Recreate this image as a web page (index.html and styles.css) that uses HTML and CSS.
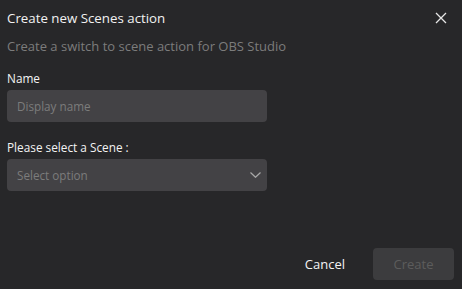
FILE: index.html
```html
<!DOCTYPE html>
<html lang="en">
<head>
<meta charset="UTF-8">
<meta name="viewport" content="width=device-width, initial-scale=1.0">
<title>Create new Scenes action</title>
<link rel="stylesheet" href="styles.css">
</head>
<body>
<div class="dialog">
    <div class="header">
        <h2 class="title">Create new Scenes action</h2>
        <button class="close-btn" aria-label="Close">
            <svg width="12" height="12" viewBox="0 0 12 12"><path d="M1 1L11 11M11 1L1 11" stroke="#e6e6e6" stroke-width="1.3" fill="none"/></svg>
        </button>
    </div>
    <p class="subtitle">Create a switch to scene action for OBS Studio</p>

    <label class="label" for="displayName">Name</label>
    <input type="text" id="displayName" class="input-field" placeholder="Display name">

    <label class="label" for="scene">Please select a Scene :</label>
    <div class="select-wrap">
        <div class="select-field" id="scene">Select option</div>
        <svg class="chevron" width="11" height="6" viewBox="0 0 11 6"><path d="M0.5 0.5L5.5 5.3L10.5 0.5" stroke="#a8a8a8" stroke-width="1.2" fill="none"/></svg>
    </div>

    <div class="footer">
        <button class="cancel-btn">Cancel</button>
        <button class="create-btn" disabled>Create</button>
    </div>
</div>
</body>
</html>
```

FILE: styles.css
```css
html, body {
    height: 100%;
}
body {
    background-color: #272729;
    color: #fff;
    font-family: "Open Sans", "Noto Sans", sans-serif;
    margin: 0;
}
.dialog {
    height: 100%;
    box-sizing: border-box;
    padding: 7px 8px 9px 7px;
    display: flex;
    flex-direction: column;
}
.header {
    display: flex;
    justify-content: space-between;
    align-items: center;
    height: 22px;
}
.title {
    margin: 0;
    font-size: 13.3px;
    font-weight: 400;
    color: #f2f2f2;
}
.close-btn {
    background: none;
    border: none;
    padding: 0;
    margin-right: 7px;
    width: 12px;
    height: 12px;
    display: flex;
    cursor: pointer;
}
.subtitle {
    margin: 7px 0 0;
    font-size: 13px;
    color: #7c7c7c;
    line-height: 20px;
}
.label {
    font-size: 11.8px;
    color: #f4f4f4;
    margin-top: 12px;
    line-height: 20px;
}
.label + .input-field {
    margin-top: 2px;
}
.input-field, .select-field {
    width: 260px;
    height: 32px;
    box-sizing: border-box;
    background-color: #434245;
    border: none;
    outline: none;
    border-radius: 4px;
    padding: 0 10px;
    font-family: inherit;
    font-size: 11.7px;
    color: #7c7c7c;
}
.input-field::placeholder {
    color: #7c7c7c;
}
.input-field + .label {
    margin-top: 15px;
}
.select-wrap {
    position: relative;
    margin-top: 2px;
    width: 260px;
}
.select-field {
    display: flex;
    align-items: center;
}
.chevron {
    position: absolute;
    right: 6px;
    top: 13px;
}
.footer {
    margin-top: auto;
    display: flex;
    justify-content: flex-end;
    align-items: center;
    gap: 28px;
}
.cancel-btn {
    background: none;
    border: none;
    color: #f4f4f4;
    font-family: inherit;
    font-size: 13px;
    padding: 0;
    cursor: pointer;
}
.create-btn {
    width: 81px;
    height: 32px;
    background-color: #3c3c3e;
    color: #5c5c5c;
    border: none;
    border-radius: 4px;
    font-family: inherit;
    font-size: 13px;
}
```
